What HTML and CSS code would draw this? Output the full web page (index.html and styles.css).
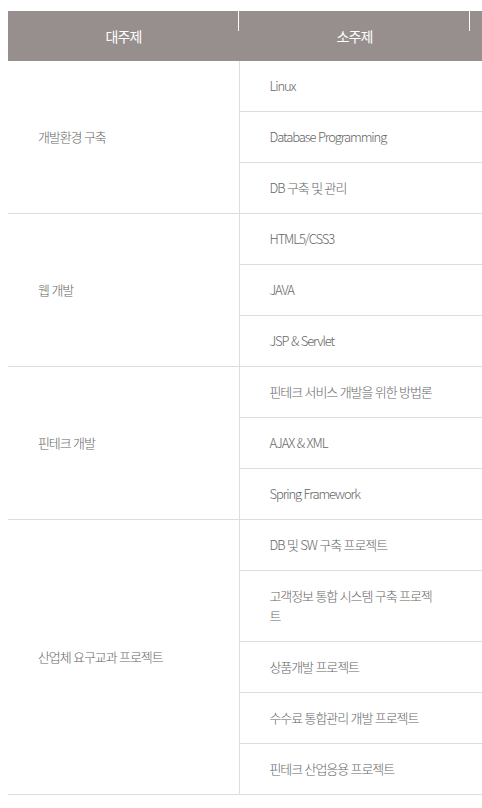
FILE: index.html
```html
<!DOCTYPE html>
<html lang="ko">
<head>
<meta charset="utf-8">
<link rel="stylesheet" href="styles.css">
</head>
<body>
<div class="wrap">
<table class="curri">
  <colgroup>
    <col class="c1"><col class="c2"><col class="c3">
  </colgroup>
  <thead>
    <tr><th>대주제</th><th>소주제</th><th></th></tr>
  </thead>
  <tbody>
    <tr><td class="main" rowspan="3">개발환경 구축</td><td>Linux</td><td class="ex"></td></tr>
    <tr><td>Database Programming</td><td class="ex"></td></tr>
    <tr><td>DB 구축 및 관리</td><td class="ex"></td></tr>
    <tr><td class="main" rowspan="3">웹 개발</td><td>HTML5/CSS3</td><td class="ex"></td></tr>
    <tr><td>JAVA</td><td class="ex"></td></tr>
    <tr><td>JSP &amp; Servlet</td><td class="ex"></td></tr>
    <tr><td class="main" rowspan="3">핀테크 개발</td><td>핀테크 서비스 개발을 위한 방법론</td><td class="ex"></td></tr>
    <tr><td>AJAX &amp; XML</td><td class="ex"></td></tr>
    <tr><td>Spring Framework</td><td class="ex"></td></tr>
    <tr><td class="main" rowspan="5">산업체 요구교과 프로젝트</td><td>DB 및 SW 구축 프로젝트</td><td class="ex"></td></tr>
    <tr><td>고객정보 통합 시스템 구축 프로젝트</td><td class="ex"></td></tr>
    <tr><td>상품개발 프로젝트</td><td class="ex"></td></tr>
    <tr><td>수수료 통합관리 개발 프로젝트</td><td class="ex"></td></tr>
    <tr><td>핀테크 산업응용 프로젝트</td><td class="ex"></td></tr>
  </tbody>
</table>
</div>
</body>
</html>
```
FILE: styles.css
```css
html, body {
  margin: 0;
  padding: 0;
  background: #fff;
}
body {
  font-family: "Noto Sans CJK KR", "Noto Sans", sans-serif;
  overflow: hidden;
}
.wrap {
  margin: 11px 0 0 8px;
  overflow: hidden;
}
.curri {
  width: 693px;
  table-layout: fixed;
  border-collapse: collapse;
}
.c1, .c2, .c3 { width: 231px; }
.curri th {
  position: relative;
  height: 50px;
  padding: 0;
  background: #968f8d;
  color: #fff;
  font-size: 14px;
  font-weight: 400;
  letter-spacing: -0.8px;
  text-align: center;
  vertical-align: middle;
}
.curri th::after {
  content: "";
  position: absolute;
  right: 0;
  top: 0;
  width: 1px;
  height: 20px;
  background: #fff;
}
.curri td {
  padding: 15px 30px;
  font-size: 13px;
  font-weight: 300;
  line-height: 20px;
  letter-spacing: -1.1px;
  color: #666;
  text-align: left;
  vertical-align: middle;
  border-bottom: 1px solid #ddd;
}
.curri td.main {
  border-right: 1px solid #ddd;
}
```
